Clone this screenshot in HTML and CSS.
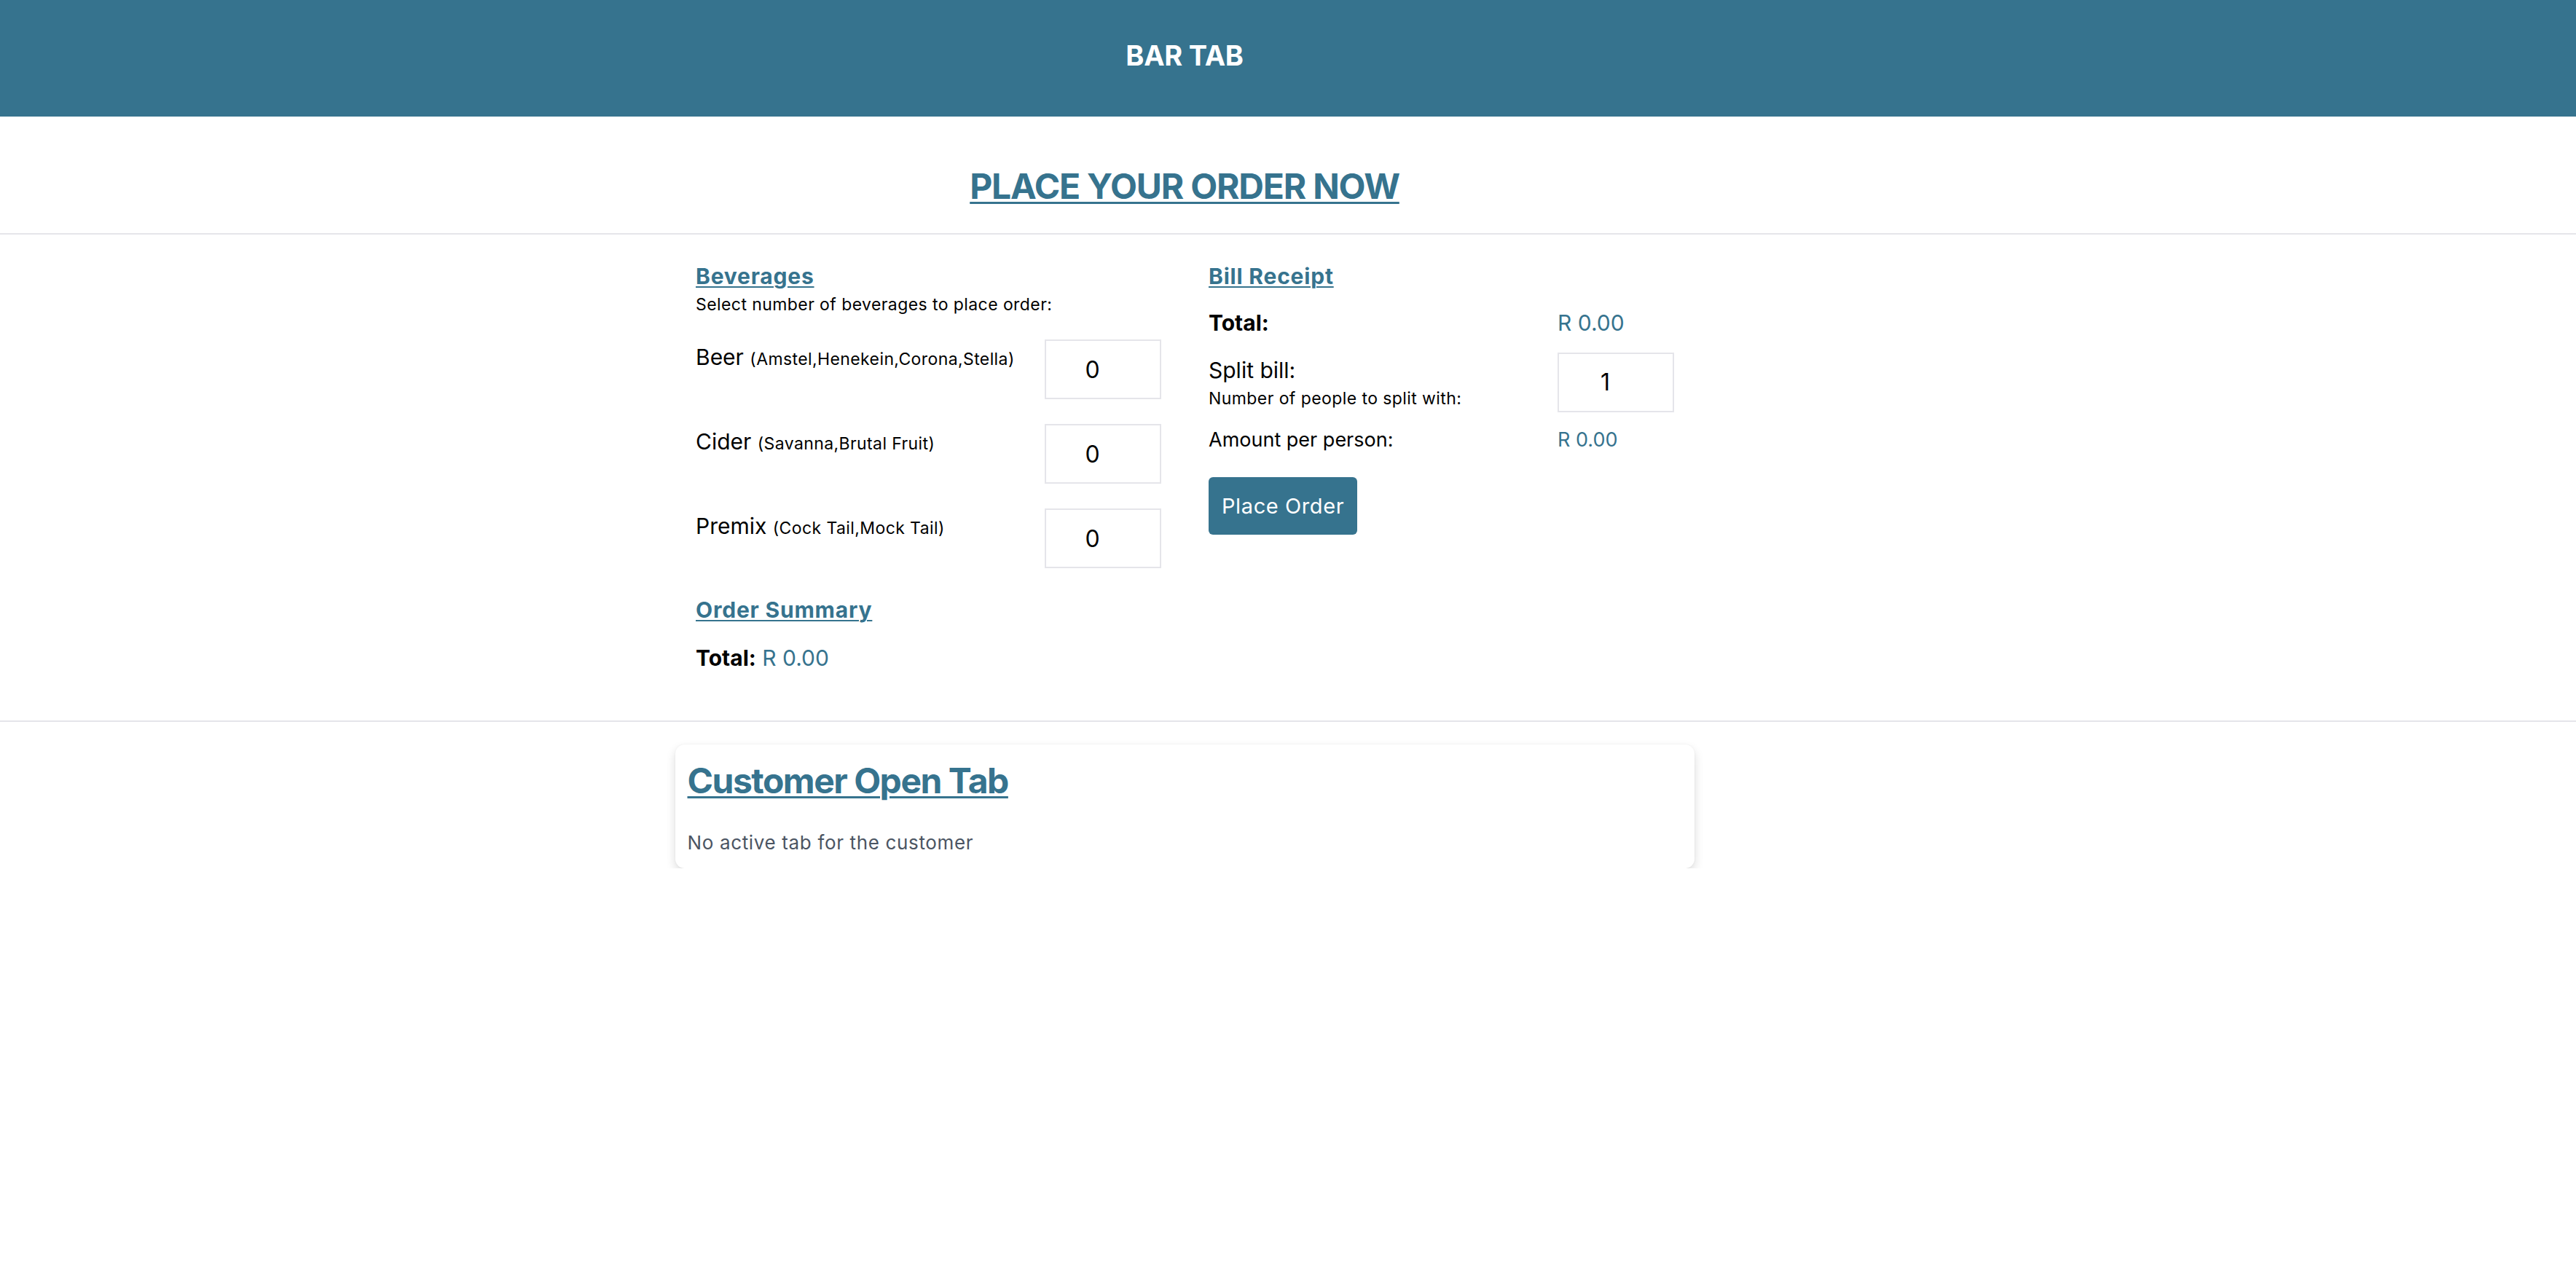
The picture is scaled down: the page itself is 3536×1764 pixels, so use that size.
FILE: index.html
```html
<!DOCTYPE html>
<html lang="en">
<head>
<meta charset="utf-8">
<title>Bar Tab</title>
<link rel="stylesheet" href="styles.css">
</head>
<body>
<header class="topbar">
  <div class="inner">
    <h1 class="brand">BAR TAB</h1>
  </div>
</header>

<section class="hero">
  <div class="inner">
    <h2 class="hero-title">PLACE YOUR ORDER NOW</h2>
  </div>
</section>

<section class="order">
  <div class="inner">
    <div class="columns">
      <div class="col">
        <h3 class="sub">Beverages</h3>
        <p class="hint">Select number of beverages to place order:</p>
        <div class="bev-list">
          <div class="bev-row">
            <label class="bev-label">Beer <small>(Amstel,Henekein,Corona,Stella)</small></label>
            <input class="qty" type="number" value="0" min="0">
          </div>
          <div class="bev-row">
            <label class="bev-label">Cider <small>(Savanna,Brutal Fruit)</small></label>
            <input class="qty" type="number" value="0" min="0">
          </div>
          <div class="bev-row">
            <label class="bev-label">Premix <small>(Cock Tail,Mock Tail)</small></label>
            <input class="qty" type="number" value="0" min="0">
          </div>
        </div>
        <h3 class="sub sub-summary">Order Summary</h3>
        <p class="summary"><strong>Total:</strong> <span class="amount">R 0.00</span></p>
      </div>

      <div class="col">
        <h3 class="sub">Bill Receipt</h3>
        <div class="bill-grid">
          <strong class="bill-total">Total:</strong>
          <span class="amount bill-total-value">R 0.00</span>
          <div class="split-label">
            <div class="split-title">Split bill:</div>
            <div class="hint">Number of people to split with:</div>
          </div>
          <input class="qty" type="number" value="1" min="1">
          <span class="per-person">Amount per person:</span>
          <span class="amount per-person-value">R 0.00</span>
        </div>
        <button class="place-btn" type="button">Place Order</button>
      </div>
    </div>
  </div>
</section>

<section class="tabs">
  <div class="inner">
    <div class="card">
      <h2 class="card-title">Customer Open Tab</h2>
      <p class="card-text">No active tab for the customer</p>
    </div>
  </div>
</section>
</body>
</html>
```

FILE: styles.css
```css
* {
  box-sizing: border-box;
}

body {
  margin: 0;
  font-family: Inter, "Noto Sans", "Liberation Sans", sans-serif;
  line-height: 1.21;
  color: #000;
  background: #fff;
}

.inner {
  width: 3252px;
}

/* header */
.topbar {
  background: #36738e;
  height: 160px;
  padding-top: 54px;
}

.brand {
  margin: 0;
  text-align: center;
  color: #fff;
  font-size: 38px;
  font-weight: 700;
  letter-spacing: -0.2px;
}

/* hero */
.hero {
  padding: 67px 0 35px;
  border-bottom: 2px solid #e5e5ea;
}

.hero-title {
  margin: 0;
  text-align: center;
  color: #36738e;
  font-size: 48px;
  font-weight: 700;
  letter-spacing: -1.2px;
  text-decoration: underline;
  text-decoration-thickness: 3px;
  text-underline-offset: 4px;
}

/* order section */
.order {
  padding: 39px 0 68px;
  border-bottom: 2px solid #e5e5ea;
}

.columns {
  width: 1342px;
  margin: 0 auto;
  display: grid;
  grid-template-columns: 639px 638px;
  column-gap: 65px;
}

.sub {
  margin: 0;
  color: #36738e;
  font-size: 30px;
  font-weight: 700;
  letter-spacing: 0.8px;
  text-decoration: underline;
  text-decoration-thickness: 2px;
  text-underline-offset: 3px;
}

.hint {
  margin: 8px 0 0;
  font-size: 23px;
  line-height: 26px;
  letter-spacing: 0.42px;
}

.bev-list {
  margin-top: 35px;
  display: flex;
  flex-direction: column;
  gap: 34px;
}

.bev-row {
  display: flex;
  justify-content: space-between;
  align-items: flex-start;
}

.bev-label {
  padding-top: 6px;
  font-size: 30px;
}

.bev-label small {
  font-size: 23px;
  letter-spacing: 0.4px;
}

.qty {
  width: 160px;
  height: 82px;
  border: 2px solid #e5e5ea;
  border-radius: 0;
  background: #fff;
  font-family: Inter, "Noto Sans", "Liberation Sans", sans-serif;
  font-size: 32px;
  color: #000;
  text-align: center;
  padding: 0 18px 0 4px;
  outline: none;
}

.qty::-webkit-inner-spin-button {
  opacity: 0;
}

.sub-summary {
  margin-top: 39px;
}

.summary {
  margin: 29px 0 0;
  font-size: 30px;
}

.amount {
  color: #36738e;
  font-weight: 400;
}

/* bill receipt */
.bill-grid {
  margin-top: 28px;
  display: grid;
  grid-template-columns: 479px 159px;
  row-gap: 22px;
  align-items: start;
}

.bill-total,
.bill-total-value {
  font-size: 30px;
}

.split-label {
  padding-top: 6px;
}

.split-title {
  font-size: 30px;
}

.per-person,
.per-person-value {
  font-size: 27px;
}

.place-btn {
  margin-top: 35px;
  height: 79px;
  padding: 0 18px;
  border: none;
  border-radius: 6px;
  background: #36738e;
  color: #fff;
  font-family: Inter, "Noto Sans", "Liberation Sans", sans-serif;
  font-size: 29px;
  letter-spacing: 0.6px;
  cursor: pointer;
}

/* open tab card */
.tabs {
  padding-top: 31px;
}

.card {
  width: 1399px;
  margin: 0 auto;
  padding: 21px 17px 19px;
  border-radius: 13px;
  background: #fff;
  box-shadow: 0 6px 14px rgba(0, 0, 0, 0.14), 0 0 3px rgba(0, 0, 0, 0.05);
}

.card-title {
  margin: 0;
  color: #36738e;
  font-size: 48px;
  font-weight: 700;
  letter-spacing: -1.5px;
  text-decoration: underline;
  text-decoration-thickness: 3px;
  text-underline-offset: 4px;
}

.card-text {
  margin: 40px 0 0;
  font-size: 26px;
  letter-spacing: 0.65px;
  color: #4b5563;
}
```
